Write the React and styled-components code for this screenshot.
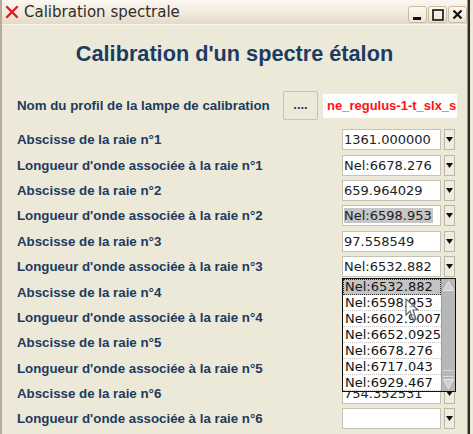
import React from 'react';
import styled, { createGlobalStyle } from 'styled-components';

const GlobalStyle = createGlobalStyle`
  html, body {
    margin: 0;
    padding: 0;
    background: #ece9d8;
  }
  body {
    width: 473px;
    height: 434px;
    overflow: hidden;
    font-family: "DejaVu Sans", sans-serif;
  }
`;

const Window = styled.div`
  width: 468px;
  height: 434px;
  box-sizing: border-box;
  border-left: 2px solid #b3ac9a;
  border-right: 1px solid #9d9684;
  box-shadow: 2px 0 0 #2a2a2a;
  background: #ece9d8;
  display: flex;
  flex-direction: column;
`;

const TitleBar = styled.div`
  height: 24px;
  flex-shrink: 0;
  display: flex;
  align-items: center;
  padding: 0 0 0 3px;
  background: linear-gradient(to bottom, #fbf8f1 0%, #f1e9db 55%, #e6dac6 100%);
  border-bottom: 1px solid #f8f5ee;
`;

const TitleText = styled.span`
  margin-left: 5px;
  font-family: "DejaVu Sans", sans-serif;
  font-size: 15px;
  color: #2e2e2e;
  flex: 1;
`;

const WinButtons = styled.div`
  display: flex;
  gap: 1px;
  align-self: flex-end;
  margin-bottom: 1px;
`;

const WinButton = styled.div`
  width: 19px;
  height: 17px;
  box-sizing: border-box;
  border: 1px solid #cdb99c;
  border-radius: 3px;
  background: linear-gradient(to bottom, #fdfaf4, #ece3d3);
  display: flex;
  align-items: center;
  justify-content: center;
`;

const Body = styled.div`
  flex: 1;
  padding: 16px 0 0 15px;
  position: relative;
`;

const Heading = styled.h1`
  margin: 0 0 24px -15px;
  text-align: center;
  font-family: "Liberation Sans", Arial, sans-serif;
  font-weight: bold;
  font-size: 21.7px;
  line-height: 26px;
  color: #1b3c62;
`;

const Label = styled.div`
  font-family: "Liberation Sans", Arial, sans-serif;
  font-weight: bold;
  font-size: 13.3px;
  color: #1d3b5f;
  white-space: nowrap;
`;

const ProfileRow = styled.div`
  display: grid;
  grid-template-columns: 1fr 35px 134px;
  column-gap: 5px;
  align-items: center;
  height: 29px;
  padding-right: 10px;
  margin-bottom: 7px;
`;

const DotsButton = styled.div`
  height: 29px;
  box-sizing: border-box;
  border: 1px solid #c6c2b4;
  border-radius: 2px;
  background: #ece9d8;
  display: flex;
  align-items: center;
  justify-content: center;
  font-family: "Liberation Sans", Arial, sans-serif;
  font-weight: bold;
  font-size: 13px;
  color: #1d3b5f;
  padding-bottom: 2px;
`;

const ProfileField = styled.div`
  height: 24px;
  background: #fff;
  overflow: hidden;
  white-space: nowrap;
  font-family: "Liberation Sans", Arial, sans-serif;
  font-weight: bold;
  font-size: 13px;
  line-height: 24px;
  color: #ff1010;
  padding-left: 4px;
`;

const Row = styled.div`
  display: grid;
  grid-template-columns: 1fr 113px;
  align-items: center;
  height: 25.4px;
  padding-right: 12px;
`;

const Combo = styled.div`
  position: relative;
  display: flex;
  gap: 3px;
  height: 21px;
`;

const Field = styled.div`
  flex: 1;
  box-sizing: border-box;
  background: #fff;
  border: 1px solid #c5c2b5;
  font-family: "DejaVu Sans", sans-serif;
  font-size: 13px;
  line-height: 19px;
  color: #222;
  padding-left: 1px;
  white-space: nowrap;
  overflow: hidden;
`;

const Selected = styled.span`
  background: #c6c6c6;
  padding-right: 1px;
`;

const ArrowButton = styled.div`
  width: 11px;
  box-sizing: border-box;
  border: 1px solid #bbb7aa;
  background: #efece0;
  display: flex;
  align-items: center;
  justify-content: center;
`;

const List = styled.div`
  position: absolute;
  top: calc(100% + 1px);
  left: 0;
  width: 114px;
  box-sizing: border-box;
  border: 1px solid #111;
  background: rgba(255, 255, 255, 0.93);
  display: flex;
  z-index: 5;
`;

const Items = styled.div`
  flex: 1;
  display: flex;
  flex-direction: column;
`;

const Item = styled.div`
  height: 16px;
  box-sizing: border-box;
  line-height: 16px;
  font-family: "DejaVu Sans", sans-serif;
  font-size: 13px;
  color: #151515;
  padding-left: 2px;
  border-bottom: 1px dotted #c4c4c4;
  white-space: nowrap;
  overflow: hidden;
  background: ${p => (p.$active ? '#c4c4c4' : 'transparent')};
  outline: ${p => (p.$active ? '1px dotted #333' : 'none')};
  outline-offset: -1px;
`;

const ScrollBar = styled.div`
  width: 13px;
  background: #b7b7b7;
  border-left: 1px solid #a0a0a0;
  display: flex;
  flex-direction: column;
  justify-content: space-between;
  align-items: center;
  padding: 2px 0 2px;
`;

const Grip = styled.div`
  width: 11px;
  height: 5px;
  border-top: 1px solid #d8d8d8;
  border-bottom: 1px solid #d8d8d8;
  margin-top: auto;
  margin-bottom: 2px;
`;

const Cursor = styled.svg`
  position: absolute;
  left: 62px;
  top: 19px;
  pointer-events: none;
`;

const Triangle = () => (
  <svg width="7" height="5" viewBox="0 0 7 5">
    <polygon points="0,0 7,0 3.5,5" fill="#111" />
  </svg>
);

const listValues = [
  'Nel:6532.882',
  'Nel:6598.953',
  'Nel:6602.9007',
  'Nel:6652.0925',
  'Nel:6678.276',
  'Nel:6717.043',
  'Nel:6929.467',
];

const rows = [
  { label: 'Abscisse de la raie n°1', value: '1361.000000' },
  { label: "Longueur d'onde associée à la raie n°1", value: 'Nel:6678.276' },
  { label: 'Abscisse de la raie n°2', value: '659.964029' },
  { label: "Longueur d'onde associée à la raie n°2", value: 'Nel:6598.953', selected: true },
  { label: 'Abscisse de la raie n°3', value: '97.558549' },
  { label: "Longueur d'onde associée à la raie n°3", value: 'Nel:6532.882', open: true },
  { label: 'Abscisse de la raie n°4', value: '' },
  { label: "Longueur d'onde associée à la raie n°4", value: '' },
  { label: 'Abscisse de la raie n°5', value: '' },
  { label: "Longueur d'onde associée à la raie n°5", value: '' },
  { label: 'Abscisse de la raie n°6', value: '754.352531' },
  { label: "Longueur d'onde associée à la raie n°6", value: '' },
];

function DropList() {
  return (
    <List>
      <Items>
        {listValues.map((v, i) => (
          <Item key={v} $active={i === 0}>{v}</Item>
        ))}
      </Items>
      <ScrollBar>
        <svg width="11" height="10" viewBox="0 0 11 10">
          <polygon points="5.5,0.5 10.5,9.5 0.5,9.5" fill="#cfcfcf" stroke="#e9e9e9" />
        </svg>
        <Grip />
        <svg width="11" height="10" viewBox="0 0 11 10">
          <polygon points="0.5,0.5 10.5,0.5 5.5,9.5" fill="#cfcfcf" stroke="#e9e9e9" />
        </svg>
      </ScrollBar>
      <Cursor width="14" height="28" viewBox="0 0 14 28">
        <path d="M1 1 L1 17 L5 13 L8 22 L11 21 L8 12 L13 12 Z" fill="rgba(255,255,255,0.6)" stroke="#666" strokeWidth="1.2" />
      </Cursor>
    </List>
  );
}

export default function App() {
  return (
    <>
      <GlobalStyle />
      <Window>
        <TitleBar>
          <svg width="14" height="14" viewBox="0 0 14 14">
            <path d="M2 2 L12 12 M12 2 L2 12" stroke="#e01b1b" strokeWidth="2.4" strokeLinecap="round" />
          </svg>
          <TitleText>Calibration spectrale</TitleText>
          <WinButtons>
            <WinButton>
              <svg width="11" height="11" viewBox="0 0 11 11">
                <rect x="1" y="8" width="8" height="3" fill="#111" />
              </svg>
            </WinButton>
            <WinButton>
              <svg width="12" height="12" viewBox="0 0 12 12">
                <rect x="1" y="1" width="10" height="10" fill="none" stroke="#111" strokeWidth="1.6" />
              </svg>
            </WinButton>
            <WinButton>
              <svg width="11" height="11" viewBox="0 0 11 11">
                <path d="M1.5 1.5 L9.5 9.5 M9.5 1.5 L1.5 9.5" stroke="#111" strokeWidth="2.2" />
              </svg>
            </WinButton>
          </WinButtons>
        </TitleBar>
        <Body>
          <Heading>Calibration d'un spectre étalon</Heading>
          <ProfileRow>
            <Label>Nom du profil de la lampe de calibration</Label>
            <DotsButton>....</DotsButton>
            <ProfileField>ne_regulus-1-t_slx_s</ProfileField>
          </ProfileRow>
          {rows.map(r => (
            <Row key={r.label}>
              <Label>{r.label}</Label>
              <Combo>
                <Field>{r.selected ? <Selected>{r.value}</Selected> : r.value}</Field>
                <ArrowButton><Triangle /></ArrowButton>
                {r.open && <DropList />}
              </Combo>
            </Row>
          ))}
        </Body>
      </Window>
    </>
  );
}
